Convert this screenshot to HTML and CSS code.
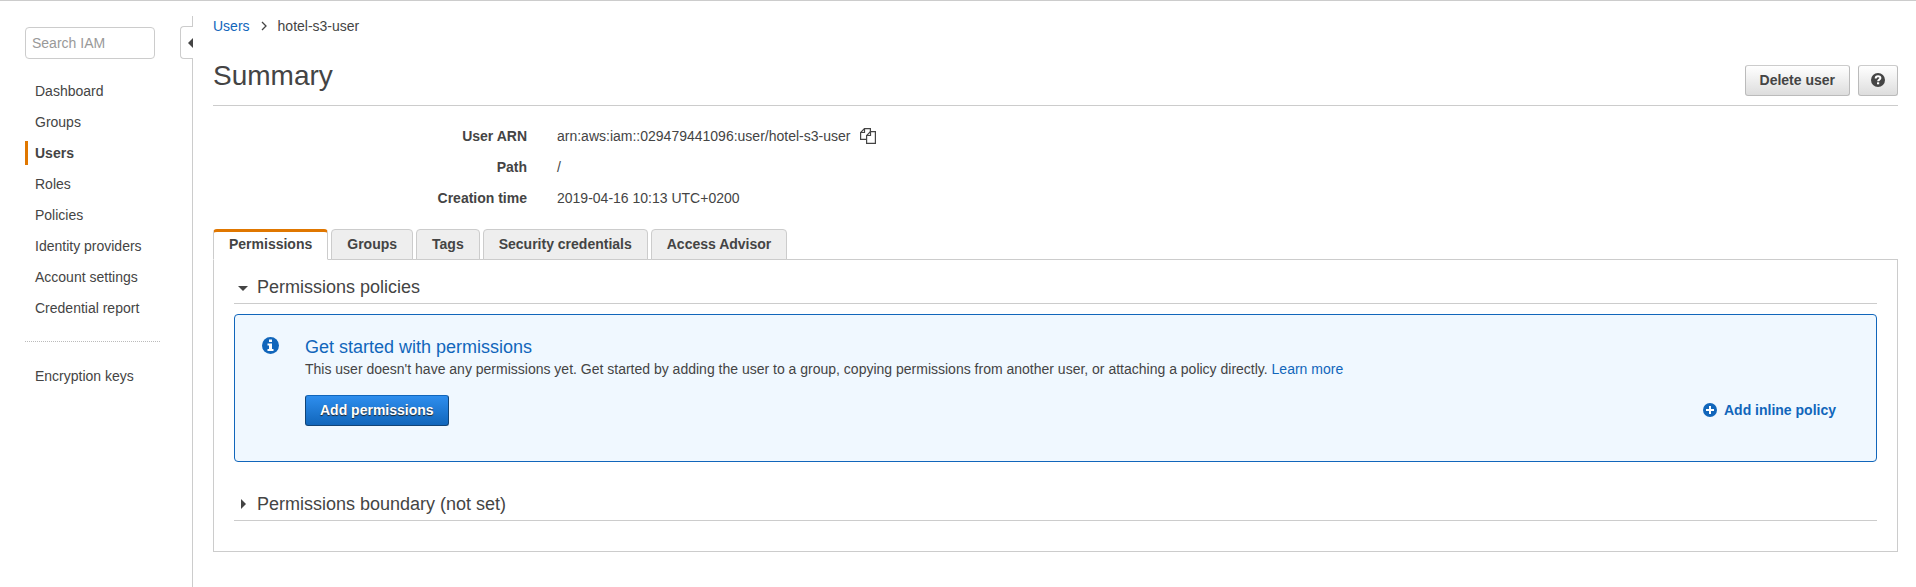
FILE: index.html
```html
<!DOCTYPE html>
<html lang="en">
<head>
<meta charset="utf-8">
<title>IAM - hotel-s3-user</title>
<link rel="stylesheet" href="styles.css">
</head>
<body>
<div class="page">
  <aside class="sidebar">
    <input class="search" type="search" placeholder="Search IAM" aria-label="Search IAM">
    <button class="collapse" type="button" aria-label="Collapse navigation">
      <svg width="5" height="10" viewBox="0 0 5 10"><path d="M5 0v10L0 5z" fill="#444"/></svg>
    </button>
    <nav class="nav">
      <a href="#">Dashboard</a>
      <a href="#">Groups</a>
      <a class="current" href="#">Users</a>
      <a href="#">Roles</a>
      <a href="#">Policies</a>
      <a href="#">Identity providers</a>
      <a href="#">Account settings</a>
      <a href="#">Credential report</a>
    </nav>
    <nav class="nav nav-extra">
      <a href="#">Encryption keys</a>
    </nav>
  </aside>
  <main class="main">
    <div class="breadcrumb">
      <a href="#">Users</a>
      <svg width="6" height="10" viewBox="0 0 6 10"><path d="M1 1l4 4-4 4" fill="none" stroke="#444" stroke-width="1.3"/></svg>
      <span>hotel-s3-user</span>
    </div>
    <header class="header">
      <h1>Summary</h1>
      <div class="actions">
        <button class="button" type="button">Delete user</button>
        <button class="button button-help" type="button" aria-label="Help">
          <svg width="14" height="14" viewBox="0 0 14 14"><circle cx="7" cy="7" r="7" fill="#444"/><path d="M4.700 5.400C4.700 2.400 9.400 2.500 9.400 5c0 1.600-2.300 1.600-2.300 3.300" fill="none" stroke="#fff" stroke-width="2"/><path d="M6 9.300h2.200v2H6z" fill="#fff"/></svg>
        </button>
      </div>
    </header>
    <dl class="details">
      <dt>User ARN</dt>
      <dd>arn:aws:iam::029479441096:user/hotel-s3-user
        <button class="copy" type="button" aria-label="Copy ARN">
          <svg width="16" height="16" viewBox="0 0 16 16" fill="#fff" stroke="#444" stroke-width="1.2"><path d="M4.500.6h5.900v10.800H.6V4.500z"/><path d="M.6 4.500h3.900V.6" fill="none"/><path d="M10.500 3.600h4.900v11.800H6.600V7.500z"/><path d="M6.600 7.500h3.900V3.600" fill="none"/></svg>
        </button>
      </dd>
      <dt>Path</dt>
      <dd>/</dd>
      <dt>Creation time</dt>
      <dd>2019-04-16 10:13 UTC+0200</dd>
    </dl>
    <div class="tabs" role="tablist">
      <button class="tab active" type="button" role="tab" aria-selected="true">Permissions</button>
      <button class="tab" type="button" role="tab" aria-selected="false">Groups</button>
      <button class="tab" type="button" role="tab" aria-selected="false">Tags</button>
      <button class="tab" type="button" role="tab" aria-selected="false">Security credentials</button>
      <button class="tab" type="button" role="tab" aria-selected="false">Access Advisor</button>
    </div>
    <section class="panel">
      <h2 class="section-title">
        <svg width="10" height="10" viewBox="0 0 10 10"><path d="M0 4h10L5 9z" fill="#444"/></svg>
        <span>Permissions policies</span>
      </h2>
      <div class="notice">
        <svg class="notice-icon" width="17" height="17" viewBox="0 0 17 17"><circle cx="8.500" cy="8.500" r="8.500" fill="#1166bb"/><path d="M7 2.500h3v2.500H7zM5.500 6.500H10v5.500h1.500v2h-6v-2H7V8.500H5.500z" fill="#fff"/></svg>
        <div class="notice-body">
          <h3>Get started with permissions</h3>
          <p>This user doesn't have any permissions yet. Get started by adding the user to a group, copying permissions from another user, or attaching a policy directly. <a href="#">Learn more</a></p>
          <div class="notice-actions">
            <button class="button button-primary" type="button">Add permissions</button>
            <a class="inline-policy" href="#">
              <svg width="14" height="14" viewBox="0 0 14 14"><circle cx="7" cy="7" r="7" fill="#1166bb"/><path d="M6 3h2v3h3v2H8v3H6V8H3V6h3z" fill="#fff"/></svg>
              Add inline policy
            </a>
          </div>
        </div>
      </div>
      <h2 class="section-title">
        <svg width="10" height="10" viewBox="0 0 10 10"><path d="M3 0v10l5-5z" fill="#444"/></svg>
        <span>Permissions boundary (not set)</span>
      </h2>
    </section>
  </main>
</div>
</body>
</html>
```

FILE: styles.css
```css
* {
  box-sizing: border-box;
}

body {
  margin: 0;
  background: #fff;
  color: #444;
  font: 14px/20px "Liberation Sans", Arial, sans-serif;
}

button,
input {
  font: inherit;
  color: inherit;
}

button {
  cursor: pointer;
}

h1,
h2,
h3,
p,
dl,
dd {
  margin: 0;
  font-weight: normal;
}

a {
  color: #1166bb;
  text-decoration: none;
}

svg {
  display: block;
  flex: none;
}

.page {
  display: flex;
  min-height: 100vh;
  padding-top: 15px;
  border-top: 1px solid #ccc;
}

.sidebar {
  position: relative;
  flex: none;
  width: 193px;
  padding: 11px 32px 0 25px;
  border-right: 1px solid #ccc;
}

.search {
  display: block;
  width: 130px;
  height: 32px;
  padding: 0 6px;
  border: 1px solid #ccc;
  border-radius: 4px;
  background: #fff;
  appearance: none;
  outline: 0;
}

.search::placeholder {
  color: #999;
}

.collapse {
  position: absolute;
  top: 10px;
  right: -1px;
  display: flex;
  align-items: center;
  justify-content: flex-end;
  width: 13px;
  height: 33px;
  padding: 0;
  border: 1px solid #ccc;
  border-right: 0;
  border-radius: 4px 0 0 4px;
  background: #fff;
}

.nav {
  display: flex;
  flex-direction: column;
  gap: 7px;
  padding-top: 20px;
}

.nav a {
  padding-left: 7px;
  border-left: 3px solid transparent;
  color: #444;
  line-height: 24px;
}

.nav .current {
  border-color: #e07700;
  font-weight: bold;
}

.nav-extra {
  margin-top: 21px;
  padding-top: 22px;
  border-top: 1px dotted #bbb;
}

.main {
  flex: 1;
  min-width: 0;
  padding: 0 18px 35px 20px;
}

.breadcrumb {
  display: flex;
  align-items: center;
  gap: 11px;
}

.header {
  display: flex;
  align-items: flex-end;
  justify-content: space-between;
  padding: 22px 0 9px;
  border-bottom: 1px solid #ccc;
}

h1 {
  font-size: 28px;
  line-height: 36px;
  align-self: flex-start;
}

.actions {
  display: flex;
  gap: 8px;
  padding-top: 7px;
}

.button {
  height: 31px;
  padding: 0 14px 2px;
  border: 1px solid #bbb;
  border-top-color: #ccc;
  border-radius: 3px;
  background: linear-gradient(#fff, #ddd);
  font-weight: bold;
}

.button-help {
  width: 40px;
  padding: 0 12px 2px;
}

.details {
  display: grid;
  grid-template-columns: 314px 1fr;
  gap: 11px 30px;
  padding: 20px 0 21px;
}

.details dt {
  font-weight: bold;
  text-align: right;
}

.details dd {
  display: flex;
  align-items: center;
  gap: 10px;
}

.copy {
  padding: 0;
  border: 0;
  background: none;
}

.tabs {
  display: flex;
  gap: 3px;
  margin-bottom: -1px;
}

.tab {
  height: 31px;
  padding: 0 15px 2px;
  border: 1px solid #ccc;
  border-radius: 4px 4px 0 0;
  background: #eee;
  font-weight: bold;
}

.tab.active {
  z-index: 1;
  padding-bottom: 4px;
  border-top: 3px solid #e07700;
  border-bottom-color: #fff;
  background: #fff;
}

.panel {
  padding: 15px 20px 30px;
  border: 1px solid #ccc;
}

.section-title {
  display: flex;
  align-items: center;
  gap: 9px;
  padding: 0 4px 4px;
  border-bottom: 1px solid #ccc;
  font-size: 18px;
  line-height: 24px;
}

.notice {
  display: flex;
  gap: 26px;
  margin: 10px 0 30px;
  padding: 20px 40px 35px 27px;
  border: 1px solid #1166bb;
  border-radius: 4px;
  background: #f0f8ff;
}

.notice-icon {
  margin-top: 2px;
}

.notice-body {
  flex: 1;
}

.notice h3 {
  color: #1166bb;
  font-size: 18px;
  line-height: 24px;
}

.notice-actions {
  display: flex;
  align-items: center;
  justify-content: space-between;
  margin-top: 16px;
}

.button-primary {
  border-color: #1166bb #114477 #114477;
  background: linear-gradient(#2e8eee, #1166bb);
  color: #fff;
  text-shadow: 0 1px 1px #222;
}

.inline-policy {
  display: flex;
  align-items: center;
  gap: 7px;
  padding-bottom: 2px;
  font-weight: bold;
}
```
